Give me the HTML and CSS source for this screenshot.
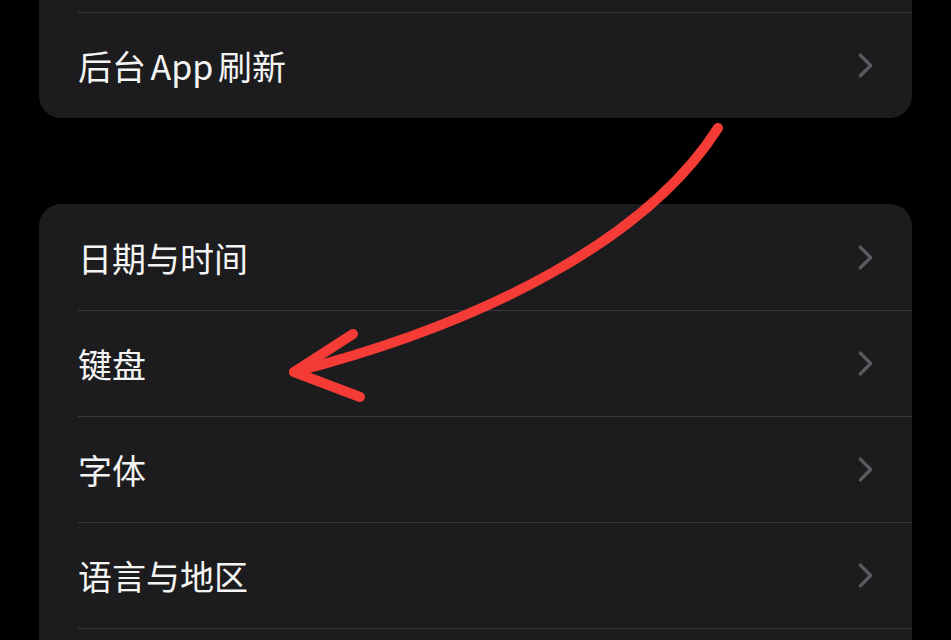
FILE: index.html
```html
<!DOCTYPE html>
<html>
  <head>
    <title>通用</title>
    <link rel="stylesheet" href="styles.css">
  </head>
  <body>
    <div class="settings">
      <div class="group group-top">
        <div class="row row-hidden"></div>
        <div class="row">
          <span class="label">后台 App 刷新</span>
          <svg class="chevron" viewBox="0 0 16 26"><polyline points="3,3 13,13 3,23" /></svg>
        </div>
      </div>

      <div class="group">
        <div class="row">
          <span class="label">日期与时间</span>
          <svg class="chevron" viewBox="0 0 16 26"><polyline points="3,3 13,13 3,23" /></svg>
        </div>
        <div class="row">
          <span class="label">键盘</span>
          <svg class="chevron" viewBox="0 0 16 26"><polyline points="3,3 13,13 3,23" /></svg>
        </div>
        <div class="row">
          <span class="label">字体</span>
          <svg class="chevron" viewBox="0 0 16 26"><polyline points="3,3 13,13 3,23" /></svg>
        </div>
        <div class="row">
          <span class="label">语言与地区</span>
          <svg class="chevron" viewBox="0 0 16 26"><polyline points="3,3 13,13 3,23" /></svg>
        </div>
        <div class="row row-hidden"></div>
      </div>
    </div>

    <!-- hand-drawn annotation over the list -->
    <svg class="annotation" width="951" height="640" viewBox="0 0 951 640">
      <path d="M718,128 C648,238 488,322 294,372" />
      <path d="M353,334 L294,372 L360,397" />
    </svg>
  </body>
</html>
```

FILE: styles.css
```css
body {
  margin: 0;
  height: 640px;
  background-color: #000;
  font-family: "Noto Sans CJK SC", "Noto Sans", sans-serif;
  overflow: hidden;
}
.settings {
  padding: 0 39px;
  display: flex;
  flex-direction: column;
  gap: 86px;
}
.group {
  background-color: #1c1c1e;
  border-radius: 22px;
  overflow: hidden;
}
.group-top {
  margin-top: -94px;
}
.row {
  height: 106px;
  margin-left: 39px;
  padding-right: 38px;
  display: flex;
  align-items: center;
  justify-content: space-between;
  box-sizing: border-box;
}
.row + .row {
  border-top: 1px solid #38383a;
}
.label {
  color: #f4f4f4;
  font-size: 34px;
  font-weight: 400;
  word-spacing: -3px;
}
.chevron {
  width: 17px;
  height: 27px;
  fill: none;
  stroke: #5a5a5e;
  stroke-width: 3.2;
  stroke-linecap: round;
  stroke-linejoin: round;
}
.annotation {
  position: absolute;
  top: 0;
  left: 0;
  pointer-events: none;
}
.annotation path {
  fill: none;
  stroke: #f53b36;
  stroke-width: 10;
  stroke-linecap: round;
  stroke-linejoin: round;
}
```
